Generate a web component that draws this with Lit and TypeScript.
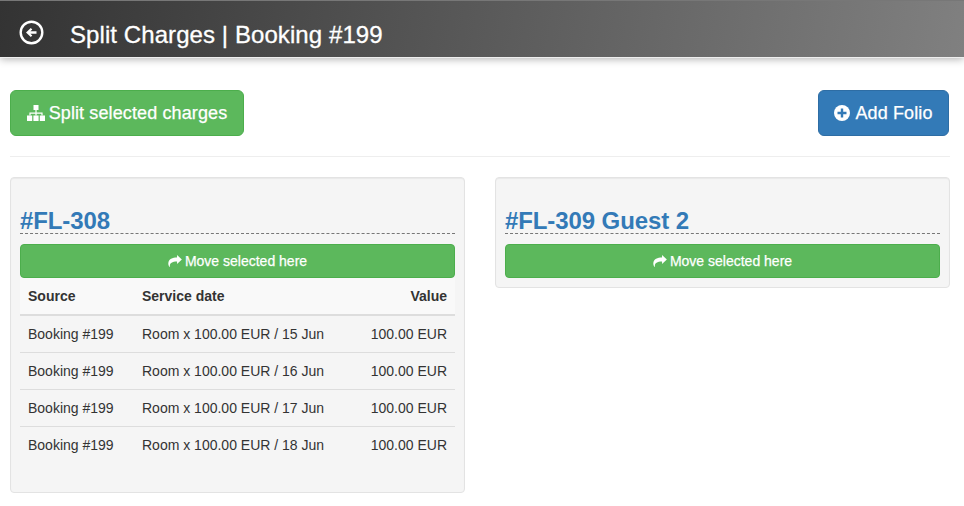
import { LitElement, html, css } from "lit";
import { customElement } from "lit/decorators.js";

const share = html`<svg class="ic-share" viewBox="0 0 16 14" width="14" height="12"><path fill="#fff" d="M16 5.2 10.4 0v3C5 3 .6 4.8.2 9.6c-.1 1.800.5 3.400 1.600 4.400.2.100.4 0 .3-.2C1.500 10 3.900 7.700 10.400 7.700v2.800z"/></svg>`;

const rows = ["15 Jun", "16 Jun", "17 Jun", "18 Jun"];

@customElement("app-root")
export class AppRoot extends LitElement {
  static styles = css`
    :host { display: block; font-family: "Liberation Sans", Arial, sans-serif; color: #333; font-size: 14px; background: #fff; height: 506px; overflow: hidden; }
    header { height: 57px; box-sizing: border-box; border-top: 1px solid #777; display: flex; align-items: center; padding: 11px 0 0 19px; gap: 26px;
      background: linear-gradient(100deg, #333 0%, #808080 100%); box-shadow: 0 1px 0 #eee, 0 2px 8px rgba(0,0,0,.32); color: #fff; font-size: 24px; position: relative; }
    header svg { display: block; flex: none; margin-top: -5px; }
    h1 { margin: 0; font: inherit; line-height: 26px; letter-spacing: .08px; -webkit-text-stroke: .3px #fff; }
    main { padding: 33px 14px 0 10px; }
    .actions { display: flex; justify-content: space-between; padding: 0 1px 20px 0; border-bottom: 1px solid #eee; margin-bottom: 20px; }
    .btn { box-sizing: border-box; display: flex; align-items: center; justify-content: center; color: #fff; border: 1px solid; border-radius: 6px; font-size: 18px; height: 46px; gap: 4px; letter-spacing: .12px; -webkit-text-stroke: .25px #fff; }
    .green { background: #5cb85c; border-color: #4cae4c; }
    .blue { background: #337ab7; border-color: #2e6da4; }
    .split { width: 234px; }
    .add { width: 131px; gap: 5px; }
    .cols { display: flex; justify-content: space-between; align-items: flex-start; }
    .well { box-sizing: border-box; width: 455px; background: #f5f5f5; border: 1px solid #e3e3e3; border-radius: 4px; padding: 19px 9px 9px; box-shadow: inset 0 1px 1px rgba(0,0,0,.05); }
    h3 { margin: 10px 0 10px; font-size: 24px; font-weight: bold; line-height: 28px; height: 26px; color: #337ab7; border-bottom: 1px dashed #777; letter-spacing: -.1px; }
    .move { height: 34px; font-size: 14px; border-radius: 4px; gap: 3px; letter-spacing: 0; }
    table { width: 100%; border-collapse: collapse; margin-bottom: 20px; }
    th, td { padding: 8px; line-height: 20px; text-align: left; }
    th { font-weight: bold; border-bottom: 2px solid #ddd; background: #f9f9f9; }
    td { border-top: 1px solid #ddd; }
    tbody tr:first-child td { border-top: 0; }
    .c1 { width: 98px; }
    .r { text-align: right; }
  `;

  render() {
    return html`
      <header>
        <svg width="25" height="25" viewBox="0 0 25 25">
          <circle cx="12.500" cy="12.500" r="10.800" fill="none" stroke="#fff" stroke-width="2.400"/>
          <path fill="#fff" d="M7 12.500 11.800 8l1.500 1.500-1.900 1.800h6.100v2.400h-6.100l1.900 1.800-1.500 1.500z"/>
        </svg>
        <h1>Split Charges | Booking #199</h1>
      </header>
      <main>
        <div class="actions">
          <div class="btn green split">
            <svg width="18" height="16" viewBox="0 0 18 16" fill="#fff">
              <path d="M6.500 0h5v5h-5zM0 10.500h5.200V16H0zM6.400 10.500h5.200V16H6.400zM12.800 10.500H18V16h-5.200z"/>
              <path d="M8.400 5h1.200v2.500h6v3h-1.200V8.700H9.600v1.800H8.400V8.700H3.600v1.800H2.400v-3h6z"/>
            </svg>
            <span>Split selected charges</span>
          </div>
          <div class="btn blue add">
            <svg width="16" height="16" viewBox="0 0 16 16">
              <circle cx="8" cy="8" r="8" fill="#fff"/>
              <path d="M6.800 3.500h2.400v3.300h3.300v2.400H9.200v3.300H6.800V9.200H3.500V6.800h3.300z" fill="#337ab7"/>
            </svg>
            <span>Add Folio</span>
          </div>
        </div>
        <div class="cols">
          <section class="well">
            <h3>#FL-308</h3>
            <div class="btn green move">${share}<span>Move selected here</span></div>
            <table>
              <thead><tr><th class="c1">Source</th><th>Service date</th><th class="r">Value</th></tr></thead>
              <tbody>
                ${rows.map((d) => html`<tr><td>Booking #199</td><td>Room x 100.00 EUR / ${d}</td><td class="r">100.00 EUR</td></tr>`)}
              </tbody>
            </table>
          </section>
          <section class="well">
            <h3>#FL-309 Guest 2</h3>
            <div class="btn green move">${share}<span>Move selected here</span></div>
          </section>
        </div>
      </main>
    `;
  }
}
